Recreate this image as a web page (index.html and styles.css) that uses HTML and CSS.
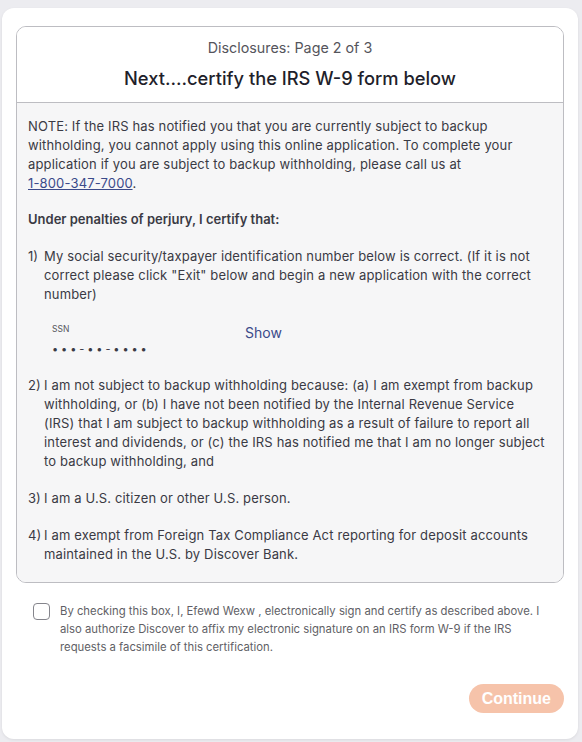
FILE: index.html
```html
<!DOCTYPE html>
<html lang="en">
<head>
    <meta charset="UTF-8">
    <meta name="viewport" content="width=device-width, initial-scale=1.0">
    <title>Disclosures - IRS W-9</title>
    <link rel="stylesheet" href="styles.css">
</head>
<body>
    <div class="card">
        <div class="disclosure">
            <div class="header">
                <p class="page-count">Disclosures: Page 2 of 3</p>
                <h1>Next....certify the IRS W-9 form below</h1>
            </div>

            <div class="content">
                <p class="note">NOTE: If the IRS has notified you that you are currently subject to backup withholding, you cannot apply using this online application. To complete your application if you are subject to backup withholding, please call us at <a href="#" class="phone">1-800-347-7000</a>.</p>

                <p class="lead">Under penalties of perjury, I certify that:</p>

                <div class="item">
                    <span class="num">1)</span>
                    <span>My social security/taxpayer identification number below is correct. (If it is not correct please click "Exit" below and begin a new application with the correct number)</span>
                </div>

                <div class="ssn">
                    <div class="ssn-field">
                        <span class="ssn-label">SSN</span>
                        <span class="ssn-value">•••-••-••••</span>
                    </div>
                    <a href="#" class="show">Show</a>
                </div>

                <div class="item">
                    <span class="num">2)</span>
                    <span>I am not subject to backup withholding because: (a) I am exempt from backup withholding, or (b) I have not been notified by the Internal Revenue Service (IRS) that I am subject to backup withholding as a result of failure to report all interest and dividends, or (c) the IRS has notified me that I am no longer subject to backup withholding, and</span>
                </div>

                <div class="item">
                    <span class="num">3)</span>
                    <span>I am a U.S. citizen or other U.S. person.</span>
                </div>

                <div class="item">
                    <span class="num">4)</span>
                    <span>I am exempt from Foreign Tax Compliance Act reporting for deposit accounts maintained in the U.S. by Discover Bank.</span>
                </div>
            </div>
        </div>

        <label class="agree">
            <input type="checkbox">
            <span class="box"></span>
            <span class="agree-text">By checking this box, I, Efewd Wexw , electronically sign and certify as described above. I also authorize Discover to affix my electronic signature on an IRS form W-9 if the IRS requests a facsimile of this certification.</span>
        </label>

        <div class="actions">
            <button class="btn" disabled>Continue</button>
        </div>
    </div>
</body>
</html>
```

FILE: styles.css
```css
* {
    margin: 0;
    padding: 0;
    box-sizing: border-box;
}

body {
    font-family: 'Inter', 'Liberation Sans', sans-serif;
    background: #ececf0;
    padding: 8px 4px 4px 2px;
    color: #33333d;
}

.card {
    background: white;
    border-radius: 12px;
    padding: 18px 14px 26px 14px;
    box-shadow: 0 1px 3px rgba(0,0,0,0.08);
    min-height: 729px;
}

.disclosure {
    border: 1px solid #bdbdc2;
    border-radius: 10px;
    overflow: hidden;
}

.header {
    background: white;
    text-align: center;
    padding: 11px 10px 13px;
    border-bottom: 1px solid #bdbdc2;
}

.page-count {
    font-size: 14.3px;
    color: #55555c;
    line-height: 20px;
}

.header h1 {
    font-size: 18.3px;
    font-weight: 500;
    color: #1f1f2b;
    margin-top: 9px;
    line-height: 22px;
}

.content {
    background: #f6f6f7;
    padding: 14px 16px 18px 11px;
    font-size: 13px;
    letter-spacing: 0.15px;
    line-height: 19px;
    color: #3a3a44;
}

.note a {
    color: #3b4a8a;
}

.phone {
    white-space: nowrap;
}

.lead {
    font-weight: 600;
    margin-top: 17px;
    letter-spacing: 0;
}

.item {
    display: flex;
    margin-top: 18px;
}

.item .num {
    width: 16px;
    flex-shrink: 0;
    letter-spacing: 0;
}

.ssn {
    display: flex;
    align-items: flex-start;
    padding: 18px 0 0 24px;
}

.ssn-field {
    display: flex;
    flex-direction: column;
    width: 193px;
}

.ssn-label {
    font-size: 8.5px;
    line-height: 14px;
    color: #55555c;
    letter-spacing: 0;
}

.ssn-value {
    font-size: 11px;
    letter-spacing: 2.9px;
    line-height: 18px;
    margin-top: 4px;
}

.show {
    color: #3b4a8a;
    text-decoration: none;
    font-size: 14px;
    letter-spacing: 0;
    line-height: 20px;
    margin-top: 1px;
}

.agree {
    display: flex;
    align-items: flex-start;
    padding: 19px 12px 0 17px;
    cursor: pointer;
}

.agree input {
    display: none;
}

.box {
    width: 17px;
    height: 17px;
    border: 1px solid #85858c;
    border-radius: 4px;
    flex-shrink: 0;
    margin-top: 1px;
}

.agree-text {
    font-size: 11.3px;
    line-height: 18px;
    color: #5f5f66;
    margin-left: 10px;
}

.actions {
    display: flex;
    justify-content: flex-end;
    margin-top: 28px;
}

.btn {
    background: #f6c3aa;
    color: white;
    border: none;
    border-radius: 15px;
    padding: 0 13px;
    height: 29px;
    font-family: 'Liberation Sans', sans-serif;
    font-size: 16px;
    font-weight: bold;
}
```
